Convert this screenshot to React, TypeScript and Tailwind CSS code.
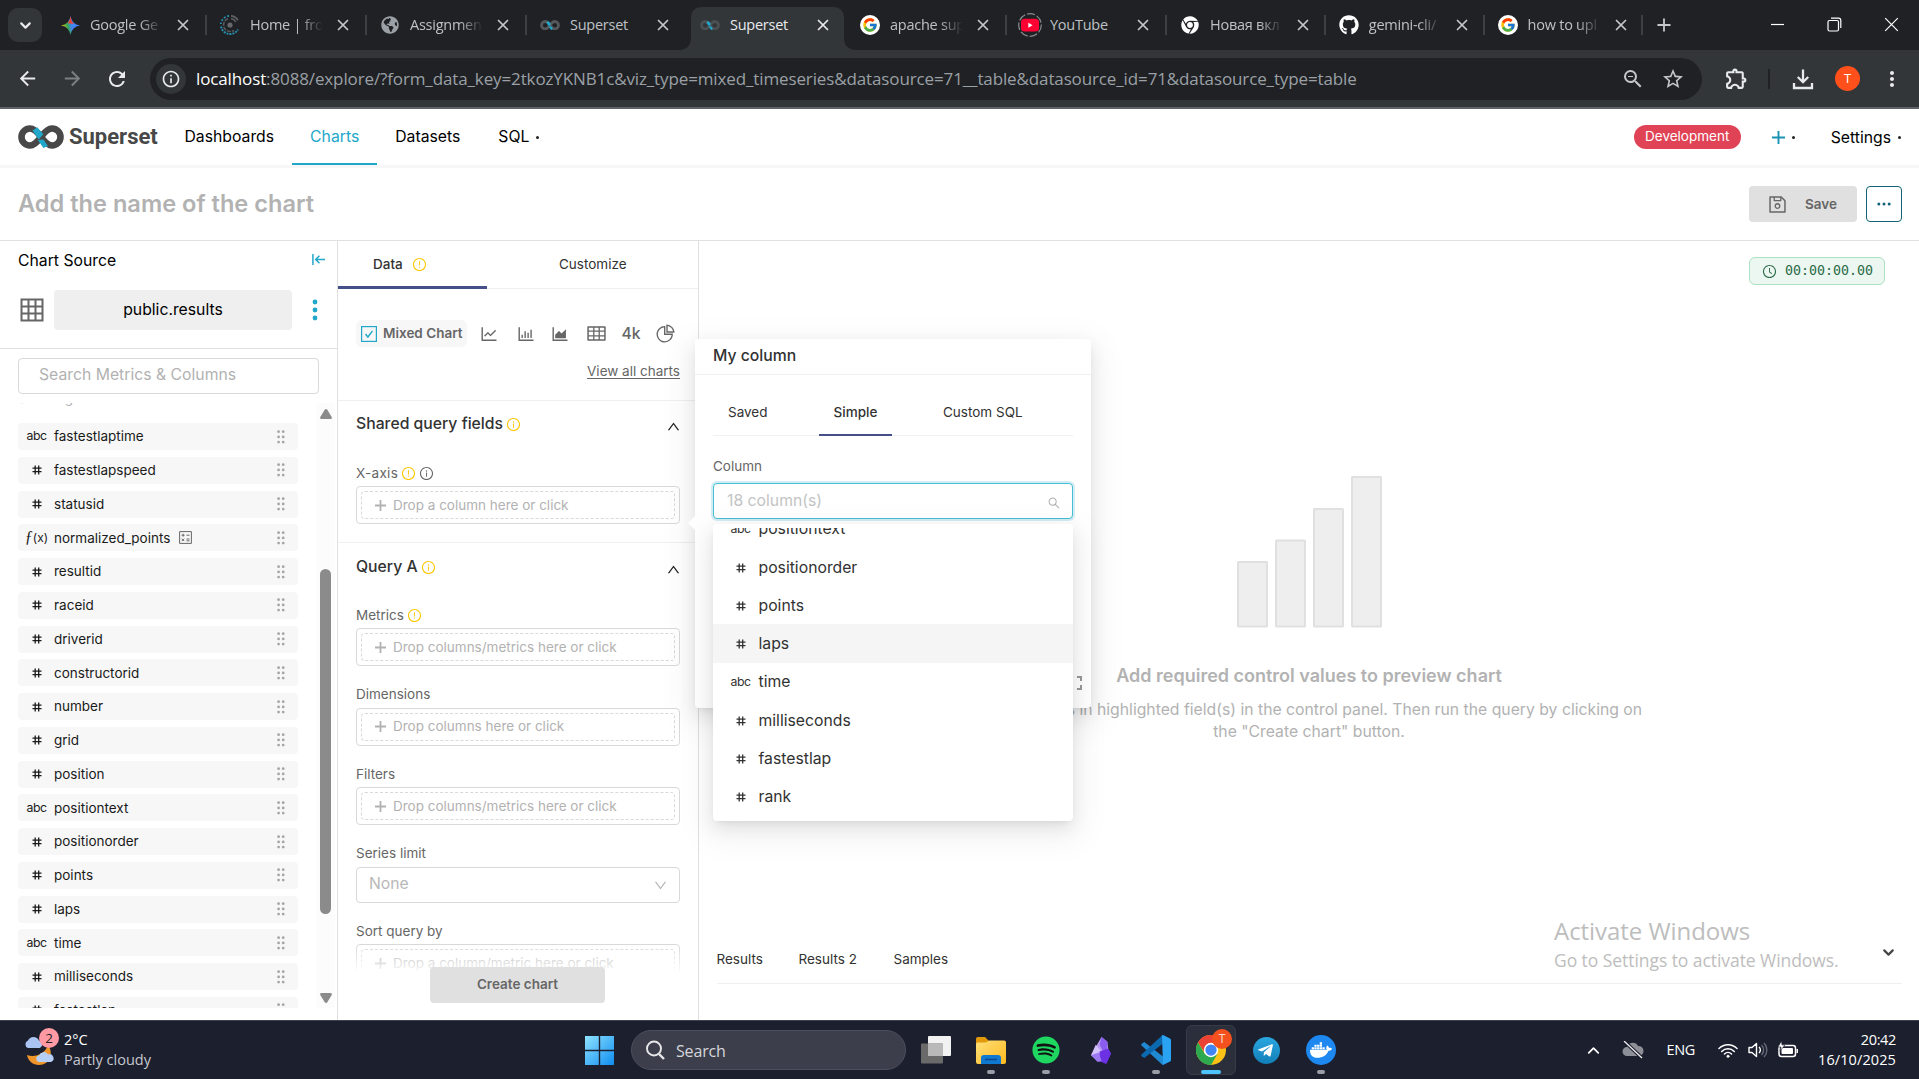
import React from "react";
import {
  AiOutlineAreaChart,
  AiOutlineBarChart,
  AiOutlineClockCircle,
  AiOutlineDown,
  AiOutlineExclamationCircle,
  AiOutlineInfoCircle,
  AiOutlineLineChart,
  AiOutlinePieChart,
  AiOutlineSave,
  AiOutlineSearch,
  AiOutlineTable,
  AiOutlineUp,
} from "react-icons/ai";
import {
  MdArrowBack,
  MdArrowForward,
  MdMoreVert,
  MdOutlineExtension,
  MdOutlineInfo,
  MdRefresh,
  MdStarBorder,
  MdZoomOut,
} from "react-icons/md";
import { FcGoogle } from "react-icons/fc";
import { FaChrome, FaDocker, FaGithub, FaGlobeAmericas, FaSpotify, FaTelegramPlane } from "react-icons/fa";
import { ChevronDown, ChevronUp, Plus, X } from "lucide-react";

/* ---------- Browser chrome ---------- */

const InfinityMark = ({ className, color = "#484848" }: { className: string; color?: string }) => (
  <svg viewBox="0 0 46 24" className={className} fill="none">
    <path
      d="M23 12C19 6.500 16 3.500 12 3.500a8.500 8.500 0 0 0 0 17c4 0 7-3 11-8.500s7-8.500 11-8.500a8.500 8.500 0 0 1 0 17c-4 0-7-3-11-8.500z"
      stroke={color}
      strokeWidth="6.600"
    />
    <path d="M14.500 5.500l4.800-3.300 6 7-4.600 5.200z" fill="#20a7c9" />
    <path d="M25.300 14.600l4.700 6.300-4.600 2-5.600-8z" fill="#20a7c9" />
  </svg>
);

const GeminiIcon = () => (
  <svg viewBox="0 0 20 20" className="size-[19px]">
    <defs>
      <linearGradient id="gem" x1="0" y1="0.600" x2="1" y2="0.400">
        <stop offset="0" stopColor="#fbbc04" />
        <stop offset="0.350" stopColor="#34a853" />
        <stop offset="0.550" stopColor="#4285f4" />
        <stop offset="1" stopColor="#4285f4" />
      </linearGradient>
    </defs>
    <path d="M10 0c.9 5.500 4.500 9.100 10 10-5.500.9-9.100 4.500-10 10-.9-5.500-4.500-9.100-10-10C5.500 9.100 9.100 5.500 10 0z" fill="url(#gem)" />
    <path d="M10 0c.9 5.500 2 7 4 8.300L7 7.500C9 5.500 9.500 3 10 0z" fill="#ea4335" />
  </svg>
);

const RadialIcon = () => (
  <svg viewBox="0 0 20 20" className="size-5" fill="none">
    <circle cx="10" cy="10" r="2.600" fill="#66686b" />
    <path d="M11 .8a9.200 9.200 0 0 1 7 4.500M11 3.500a6.600 6.600 0 0 1 4.800 3.300" stroke="#5d6063" strokeWidth="1.700" />
    <path d="M8 3.700A6.600 6.600 0 1 0 14 15.300" stroke="#55585c" strokeWidth="1.600" strokeDasharray="4 1" />
    <path d="M9 .9A9.200 9.200 0 0 0 .8 9" stroke="#2591b0" strokeWidth="1.700" strokeDasharray="2 1.600" />
    <path d="M1 11.500A9.200 9.200 0 0 0 18 14.500" stroke="#2591b0" strokeWidth="1.900" strokeDasharray="2 1" />
  </svg>
);

const GoogleIcon = () => (
  <span className="flex size-5 items-center justify-center rounded-full bg-white">
    <FcGoogle className="size-4" />
  </span>
);

const YoutubeIcon = () => (
  <svg viewBox="0 0 24 24" className="-mx-0.5 size-6 shrink-0" fill="none">
    <circle cx="12" cy="12" r="11.300" stroke="#8a8c8f" strokeWidth="1.200" strokeDasharray="8 2" />
    <rect x="3" y="5.800" width="18" height="12.800" rx="3.500" fill="#ff0033" />
    <path d="M10.300 9.700v5l4.300-2.500z" fill="#fff" />
  </svg>
);

type Tab = { title: string; icon: React.ReactNode; active?: boolean; sep?: boolean; fade?: boolean; narrow?: boolean };

const tabs: Tab[] = [
  { title: "Google Ge", icon: <GeminiIcon />, sep: true, fade: true },
  { title: "Home | fro", icon: <RadialIcon />, sep: true, fade: true },
  { title: "Assignmen", icon: <FaGlobeAmericas className="size-[18px] text-[#9aa0a6]" />, sep: true, fade: true },
  { title: "Superset", icon: <InfinityMark className="w-5" color="#55585b" /> },
  { title: "Superset", icon: <InfinityMark className="w-5" color="#4c4f52" />, active: true },
  { title: "apache sup", icon: <GoogleIcon />, sep: true, fade: true },
  { title: "YouTube", icon: <YoutubeIcon />, sep: true },
  { title: "Новая вкл", icon: <FaChrome className="size-[18px] text-white" />, sep: true, fade: true, narrow: true },
  { title: "gemini-cli/", icon: <FaGithub className="size-5 text-white" />, sep: true, fade: true, narrow: true },
  { title: "how to upl", icon: <GoogleIcon />, sep: true, fade: true, narrow: true },
];

const BrowserTab = ({ tab }: { tab: Tab }) => (
  <div className={"relative h-[50px] shrink-0 pt-[7px] " + (tab.narrow ? "w-[158.800px]" : "w-[160px]")}>
    {tab.active && (
      <svg viewBox="0 0 176 43" className="absolute top-[7px] -left-[8px] h-[43px] w-[176px]">
        <path d="M0 43c8 0 12-5 12-12V11C12 4 16 0 23 0h131c7 0 11 4 11 11v20c0 7 4 12 12 12z" fill="#323639" />
      </svg>
    )}
    <div className="relative flex h-9 items-center pl-[13px]">
      <span className="flex w-5 shrink-0 items-center justify-center">{tab.icon}</span>
      <span
        className={
          "ml-[10px] w-[76px] whitespace-nowrap text-[14.500px] tracking-[-0.250px] " +
          (tab.active ? "text-[#e8eaed]" : "text-[#bdc1c6]") +
          (tab.fade ? " [mask-image:linear-gradient(to_right,black_65%,transparent_96%)]" : "")
        }
      >
        {tab.title}
      </span>
      <X className={"ml-[8px] size-[18px] " + (tab.active ? "text-[#e8eaed]" : "text-[#c4c7cb]")} strokeWidth={2.3} />
    </div>
    {tab.sep && <div className="absolute top-[15px] right-0 h-5 w-[2px] bg-[#3c4043]" />}
  </div>
);

const Browser = () => (
  <div className="font-['Open_Sans','Noto_Sans',sans-serif]">
    <div className="flex h-[50px] bg-[#202124]">
      <div className="mt-2 ml-2 flex size-[34px] shrink-0 items-center justify-center rounded-[10px] bg-[#323639]">
        <ChevronDown className="mt-px size-[17px] text-[#e8eaed]" strokeWidth={3} />
      </div>
      <div className="ml-[5px] flex">
        {tabs.map((t, i) => (
          <BrowserTab key={i} tab={t} />
        ))}
      </div>
      <Plus className="mt-[15px] ml-[11px] size-5 text-[#c4c7cb]" strokeWidth={2.2} />
      <div className="mt-[17px] mr-[20px] ml-auto flex gap-[42px]">
        <svg viewBox="0 0 15 15" className="size-[15px]" stroke="#fff" fill="none">
          <path d="M1 7.500h13" strokeWidth="1.200" />
        </svg>
        <svg viewBox="0 0 15 15" className="size-[15px]" stroke="#fff" fill="none" strokeWidth="1.200">
          <rect x="1" y="3.500" width="10.500" height="10.500" rx="1.500" />
          <path d="M4 1.200h7.500a2.300 2.300 0 0 1 2.300 2.300V11" />
        </svg>
        <svg viewBox="0 0 15 15" className="size-[15px]" stroke="#fff" fill="none">
          <path d="M1.200 1.200l12.600 12.600M13.800 1.200L1.200 13.800" strokeWidth="1.200" />
        </svg>
      </div>
    </div>
    <div className="flex h-[59px] items-center border-b-2 border-[#5f6368] bg-[#323639]">
      <MdArrowBack className="ml-[16px] size-[23px] text-[#e8eaed]" />
      <MdArrowForward className="ml-[22px] size-[23px] text-[#7d8083]" />
      <MdRefresh className="ml-[21px] size-[24px] text-[#e8eaed]" />
      <div className="ml-[21px] flex h-[42px] w-[1552px] items-center rounded-full bg-[#202124] pl-[6px]">
        <span className="flex size-[30px] items-center justify-center rounded-full bg-[#323639]">
          <MdOutlineInfo className="size-[20px] text-[#e8eaed]" />
        </span>
        <span className="ml-[10px] pt-px text-[17px] tracking-[-0.125px] whitespace-nowrap text-[#9aa0a6]">
          <span className="text-white">localhost</span>
          :8088/explore/?form_data_key=2tkozYKNB1c&amp;viz_type=mixed_timeseries&amp;datasource=71__table&amp;datasource_id=71&amp;datasource_type=table
        </span>
        <MdZoomOut className="mt-px ml-auto size-[24px] text-[#c4c7cb]" />
        <MdStarBorder className="mt-px mr-[17px] ml-[16px] size-[24px] text-[#c4c7cb]" />
      </div>
      <MdOutlineExtension className="ml-[22px] size-[25px] text-[#e8eaed]" />
      <div className="ml-[19px] h-5 w-[2px] bg-[#202124]" />
      <svg viewBox="0 0 22 22" className="ml-[22px] size-[22px]" fill="none" stroke="#e8eaed" strokeWidth="2.300">
        <path d="M11 1.500v12.500M5.800 9l5.200 5.200L16.200 9M2 15v5h18v-5" />
      </svg>
      <span className="ml-[21px] flex size-[25px] items-center justify-center rounded-full bg-[#ff4f1a] text-[13px] text-white">T</span>
      <MdMoreVert className="ml-[20px] size-[24px] text-[#e8eaed]" />
    </div>
  </div>
);

/* ---------- Shared bits ---------- */

const Dot = ({ className }: { className: string }) => <span className={"size-[3px] rounded-full bg-[#222] " + className} />;

const TypeIcon = ({ type }: { type: string }) => {
  if (type === "abc") return <span className="text-[12.300px] tracking-[-0.500px]">abc</span>;
  if (type === "fx")
    return (
      <span className="text-[12px]">
        <span className="font-['Liberation_Serif',serif] text-[16px] leading-none italic">ƒ</span>(x)
      </span>
    );
  return (
    <svg viewBox="0 0 10 10" className="size-[10px]" stroke="currentColor" strokeWidth="1.300" fill="none">
      <path d="M3.200.5v9M6.700.5v9M.5 3.200h9M.5 6.700h9" />
    </svg>
  );
};

const Warn = ({ info }: { info?: boolean }) =>
  info ? (
    <AiOutlineInfoCircle className="size-[15px] text-[#fcc700]" />
  ) : (
    <AiOutlineExclamationCircle className="size-[15px] text-[#fcc700]" />
  );

/* ---------- Application header ---------- */

const TopNav = () => (
  <div className="flex h-[59px] items-start border-b-[3px] border-[#f7f7f7] text-[15.750px] text-black">
    <div className="flex h-14 w-[166.500px] items-center pl-[18px]">
      <InfinityMark className="mr-[5px] w-[46px]" />
      <span className="font-['Roboto',sans-serif] text-[22px] leading-none font-bold text-[#484848]">Superset</span>
    </div>
    <div className="flex h-14 items-center px-[18px]">Dashboards</div>
    <div className="flex h-14 items-center border-b-2 border-[#20a7c9] px-[18px] pt-[2px] text-[#20a7c9]">Charts</div>
    <div className="flex h-14 items-center px-[18px]">Datasets</div>
    <div className="flex h-14 items-center pl-[20px]">
      SQL <Dot className="ml-[7px]" />
    </div>
    <div className="mr-[18px] ml-auto flex h-14 items-center">
      <span className="flex h-[24px] w-[107px] items-center justify-center rounded-full bg-[#e04355] pb-[2px] text-[13.500px] text-white">
        Development
      </span>
      <svg viewBox="0 0 13 13" className="ml-[31px] size-[13px]" stroke="#1a93b3" strokeWidth="1.900">
        <path d="M6.500 0v13M0 6.500h13" />
      </svg>
      <Dot className="ml-[7px]" />
      <span className="ml-[36px] pt-[2px]">Settings</span>
      <Dot className="ml-[7px]" />
    </div>
  </div>
);

const TitleBar = () => (
  <div className="flex h-[73px] items-center border-b border-[#e0e0e0] pr-[17px] pl-[18px]">
    <span className="text-[23.600px] font-semibold text-[#b2b2b2]">Add the name of the chart</span>
    <div className="ml-auto flex h-9 w-[108px] items-center rounded bg-[#e0e0e0] pl-[18px] text-[13.500px] font-semibold text-[#666]">
      <AiOutlineSave className="mr-[17px] size-[21px]" />
      Save
    </div>
    <div className="ml-[9px] flex size-9 items-center justify-center rounded border border-[#156378]">
      <svg viewBox="0 0 14 4" className="h-1 w-[14px]" fill="#156378">
        <circle cx="1.800" cy="2" r="1.500" />
        <circle cx="7" cy="2" r="1.500" />
        <circle cx="12.200" cy="2" r="1.500" />
      </svg>
    </div>
  </div>
);

/* ---------- Dataset panel ---------- */

const fields: [string, string][] = [
  ["abc", "fastestlaptime"],
  ["#", "fastestlapspeed"],
  ["#", "statusid"],
  ["fx", "normalized_points"],
  ["#", "resultid"],
  ["#", "raceid"],
  ["#", "driverid"],
  ["#", "constructorid"],
  ["#", "number"],
  ["#", "grid"],
  ["#", "position"],
  ["abc", "positiontext"],
  ["#", "positionorder"],
  ["#", "points"],
  ["#", "laps"],
  ["abc", "time"],
  ["#", "milliseconds"],
  ["#", "fastestlap"],
];

const GridIcon = () => (
  <svg viewBox="0 0 24 24" className="size-6" fill="none" stroke="#666" strokeWidth="2">
    <path d="M1.500 1.500h21v21h-21zM8.500 1v22M15.500 1v22M1 8.500h22M1 15.500h22" />
  </svg>
);

const CalcIcon = () => (
  <svg viewBox="0 0 13 13" className="ml-[9px] size-[13px]" fill="none" stroke="#666" strokeWidth="1">
    <path d="M.6.6h11.800v11.800H.6zM2.600 4.200h3M4.100 2.700v3M7.500 4.200h3M7.500 8h3M7.500 9.800h3M2.800 7.600l2.400 2.400M5.200 7.600L2.800 10" />
  </svg>
);

const Grip = () => (
  <svg viewBox="0 0 8 14" className="ml-auto h-[14px] w-2" fill="#a6a6a6">
    {[1.700, 6.900, 12.100].map((y) => (
      <g key={y}>
        <circle cx="1.600" cy={y} r="1.400" />
        <circle cx="6.200" cy={y} r="1.400" />
      </g>
    ))}
  </svg>
);

const DatasetPanel = () => (
  <div className="flex w-[338px] shrink-0 flex-col border-r border-[#e0e0e0]">
    <div className="flex h-[49px] items-start justify-between pr-3 pl-[18px]">
      <span className="leading-[40px] text-[15.750px] text-black">Chart Source</span>
      <svg viewBox="0 0 14 12" className="mt-3 size-[13px]" fill="none" stroke="#20a7c9" strokeWidth="1.600">
        <path d="M1 0v12M4 6h10M8 2L4 6l4 4" />
      </svg>
    </div>
    <div className="flex h-[59px] items-start border-b border-[#e0e0e0] pl-[19.500px]">
      <div className="mt-2">
        <GridIcon />
      </div>
      <div className="ml-[10.500px] flex h-10 w-[238px] items-center justify-center rounded bg-[#efefef] text-[15.750px] text-black">
        public.results
      </div>
      <svg viewBox="0 0 6 22" className="mt-[8.500px] ml-[19.500px] h-[22px] w-[6px]" fill="#20a7c9">
        <circle cx="3" cy="3" r="2.400" />
        <circle cx="3" cy="11" r="2.400" />
        <circle cx="3" cy="19" r="2.400" />
      </svg>
    </div>
    <div className="mt-[9px] ml-[18px] flex h-9 w-[301px] shrink-0 items-center rounded border border-[#d9d9d9] pb-[3px] pl-[20px] text-[15.750px] text-[#b2b2b2]">
      Search Metrics &amp; Columns
    </div>
    <div className="mt-[9px] flex h-[605px] overflow-hidden">
      <div className="flex w-[316px] flex-col pl-[18px]">
        <div className="-mt-[14px] h-[34px] shrink-0 text-[13.500px] leading-[18px] text-[#b2b2b2]">Showing 18 of 18</div>
        {fields.map(([type, name]) => (
          <div key={name} className="mb-[6.750px] flex h-[27px] w-[280px] shrink-0 items-center rounded bg-[#f7f7f7] pr-[13.500px] text-[13.500px] text-[#1a1a1a]">
            <span className="flex w-9 shrink-0 items-center justify-center pl-px">
              <TypeIcon type={type} />
            </span>
            {name}
            {type === "fx" && <CalcIcon />}
            <Grip />
          </div>
        ))}
      </div>
      <div className="flex w-[19px] flex-col items-center bg-[#fcfcfc]">
        <svg viewBox="0 0 12 10" className="mt-[6px] h-[10px] w-3 shrink-0" fill="#8b8b8b">
          <path d="M6 0c.6 0 1 .3 1.300.8L11.700 8c.4.900 0 2-1 2H1.300c-1 0-1.400-1.100-1-2L4.700.8C5 .3 5.400 0 6 0z" />
        </svg>
        <div className="mt-[150px] h-[345px] w-[11px] shrink-0 rounded-full bg-[#8b8b8b]" />
        <svg viewBox="0 0 12 10" className="mt-[79px] h-[10px] w-3 shrink-0 rotate-180" fill="#8b8b8b">
          <path d="M6 0c.6 0 1 .3 1.300.8L11.700 8c.4.900 0 2-1 2H1.300c-1 0-1.400-1.100-1-2L4.700.8C5 .3 5.400 0 6 0z" />
        </svg>
      </div>
    </div>
  </div>
);

/* ---------- Control panel ---------- */

const Label = ({ children }: { children: React.ReactNode }) => (
  <div className="flex h-[26px] items-center gap-[3px] text-[13.500px] text-[#666]">{children}</div>
);

const DropBox = ({ text }: { text: string }) => (
  <div className="mb-[15.500px] h-[38px] rounded border border-[#d9d9d9] p-[4px]">
    <div className="flex h-[28px] w-[314px] items-center rounded border border-dashed border-[#d9d9d9] pb-[0.500px] pl-[13px] text-[13.500px] text-[#b2b2b2]">
      <svg viewBox="0 0 11 11" className="mt-[1px] mr-[7px] size-[11px]" stroke="#b2b2b2" strokeWidth="1.800">
        <path d="M5.500 0v11M0 5.500h11" />
      </svg>
      {text}
    </div>
  </div>
);

const SectionHeader = ({ title }: { title: string }) => (
  <div className="flex h-[45px] items-center text-[15.750px] font-medium text-[#323232]">
    {title}
    <span className="ml-[3px] pt-[2px]">
      <Warn info />
    </span>
    <AiOutlineUp className="mt-[6px] -mr-px ml-auto size-[15px] text-[#222]" />
  </div>
);

const ControlPanel = () => (
  <div className="relative flex w-[361px] shrink-0 flex-col overflow-hidden border-r border-[#e0e0e0]">
    <div className="flex h-12 shrink-0 border-b border-[#f0f0f0] text-[13.500px] text-[#323232]">
      <div className="flex h-12 w-[149px] items-center border-b-[3px] border-[#45508a] pt-[2px] pl-[35px] font-medium">
        Data
        <span className="ml-[9px]">
          <Warn />
        </span>
      </div>
      <div className="ml-[72px] flex h-[47px] items-center">Customize</div>
    </div>
    <div className="h-[112px] shrink-0 border-b border-[#f0f0f0] pt-[31px] pl-[18px]">
      <div className="flex h-[27px] w-[330px] items-center text-[#666]">
        <div className="mr-[12px] flex h-[27px] w-[111px] shrink-0 items-center rounded-md bg-[#f7f7f7] pl-[5px] text-[13.500px] font-semibold">
          <svg viewBox="0 0 16 16" className="mr-[6px] size-4 shrink-0" fill="none" stroke="#20a7c9">
            <rect x=".6" y=".6" width="14.800" height="14.800" strokeWidth="1.200" />
            <path d="M4.500 8l2.400 3 4.600-6.200" strokeWidth="1.400" />
          </svg>
          <span className="whitespace-nowrap">Mixed Chart</span>
        </div>
        <AiOutlineLineChart className="size-[20px] shrink-0" />
        <AiOutlineBarChart className="ml-[16.500px] size-[20px] shrink-0" />
        <AiOutlineAreaChart className="ml-[14px] size-[20px] shrink-0" />
        <AiOutlineTable className="ml-[16px] size-[21px] shrink-0" />
        <span className="ml-[15px] w-[19px] text-[15.750px] font-medium">4k</span>
        <AiOutlinePieChart className="ml-[14px] size-[21px] shrink-0" />
      </div>
      <div className="mt-[14px] mr-[18px] text-right text-[13.500px] leading-5 text-[#666]">
        <span className="underline underline-offset-[1.500px]">View all charts</span>
      </div>
    </div>
    <div className="h-[142px] shrink-0 border-b border-[#f0f0f0] px-[18px]">
      <SectionHeader title="Shared query fields" />
      <div className="mt-[14px]">
        <Label>
          <span className="tracking-[0.300px]">X-axis</span>
          <Warn />
          <AiOutlineInfoCircle className="size-[15px] text-[#666]" />
        </Label>
        <DropBox text="Drop a column here or click" />
      </div>
    </div>
    <div className="shrink-0 px-[18px] pt-px">
      <SectionHeader title="Query A" />
      <div className="mt-[13px]">
        <Label>
          Metrics <Warn />
        </Label>
        <DropBox text="Drop columns/metrics here or click" />
        <Label>Dimensions</Label>
        <DropBox text="Drop columns here or click" />
        <Label>Filters</Label>
        <DropBox text="Drop columns/metrics here or click" />
        <Label>Series limit</Label>
        <div className="mb-[15.500px] flex h-9 items-center justify-between rounded border border-[#d9d9d9] pr-[11px] pb-[1px] pl-[12px] text-[15.750px] text-[#b8b8b8]">
          None
          <AiOutlineDown className="mt-[2px] size-[15px]" />
        </div>
        <Label>Sort query by</Label>
        <DropBox text="Drop a column/metric here or click" />
      </div>
    </div>
    <div className="absolute inset-x-0 bottom-0 flex h-[74px] justify-center bg-[linear-gradient(to_bottom,transparent,white_28px)] pt-[21px]">
      <div className="mr-px flex h-9 w-[175px] items-center justify-center rounded bg-[#e0e0e0] pb-px text-[13.500px] font-semibold text-[#666]">
        Create chart
      </div>
    </div>
  </div>
);

/* ---------- Preview area ---------- */

const Preview = () => (
  <div className="flex flex-1 flex-col">
    <div className="flex justify-end pt-4 pr-[34px]">
      <div className="flex h-7 w-[136px] items-center rounded-md border border-[#ace1c4] bg-[#ebf7f0] pl-[12px] font-['DejaVu_Sans_Mono',monospace] text-[13.300px] text-[#2b6a48]">
        <AiOutlineClockCircle className="mr-[8px] size-[15px] shrink-0" />
        00:00:00.00
      </div>
    </div>
    <div className="mt-[191px] flex flex-col items-center">
      <svg viewBox="0 0 146 152" className="ml-[2px] h-[152px] w-[146px]" fill="#eee" stroke="#e0e0e0" strokeWidth="2">
        <rect x="1" y="86" width="29" height="64.500" rx=".5" />
        <rect x="39" y="64.500" width="29" height="86" rx=".5" />
        <rect x="77" y="33" width="29" height="117.500" rx=".5" />
        <rect x="115" y="1" width="29" height="149.500" rx=".5" />
      </svg>
      <div className="mt-[37px] text-[18px] leading-[22px] font-semibold text-[#b2b2b2]">Add required control values to preview chart</div>
      <div className="mt-[12px] w-[680px] text-center text-[15.750px] leading-[22px] text-[#b2b2b2]">
        Select values in highlighted field(s) in the control panel. Then run the query by clicking on
        <br />
        the "Create chart" button.
      </div>
    </div>
    <div className="mt-auto mr-[17px] mb-9 ml-[17.500px] flex h-[48px] items-center border-b border-[#f0f0f0] text-[13.500px] text-[#323232]">
      <span className="w-[82px]">Results</span>
      <span className="w-[95px]">Results 2</span>
      <span>Samples</span>
      <ChevronDown className="-mt-[14px] mr-[5px] ml-auto size-[17px] text-[#444]" strokeWidth={3} />
    </div>
  </div>
);

/* ---------- Column popover and its dropdown ---------- */

const options: [string, string][] = [
  ["abc", "positiontext"],
  ["#", "positionorder"],
  ["#", "points"],
  ["#", "laps"],
  ["abc", "time"],
  ["#", "milliseconds"],
  ["#", "fastestlap"],
  ["#", "rank"],
];

const Popover = () => (
  <div className="absolute top-[339px] left-[695px] h-[369px] w-[396px] rounded-sm bg-white shadow-[0_3px_7px_-4px_rgba(0,0,0,0.12),0_7px_18px_rgba(0,0,0,0.08),0_10px_32px_9px_rgba(0,0,0,0.05)]">
    <div className="absolute top-[179px] -left-[5px] size-[10px] rotate-45 bg-white" />
    <div className="relative flex h-9 items-center border-b border-[#f0f0f0] pb-[1px] pl-[18px] text-[15.750px] font-medium text-[#323232]">
      My column
    </div>
    <div className="mx-[18px] mt-[23px] flex h-[38px] border-b border-[#f0f0f0] text-[13.500px] text-[#323232]">
      <span className="w-[106px] pl-[15px] leading-[29px]">Saved</span>
      <span className="h-[38px] w-[73px] border-b-2 border-[#45508a] text-center leading-[29px] font-medium">Simple</span>
      <span className="ml-[51px] leading-[29px]">Custom SQL</span>
    </div>
    <div className="mx-[18px] mt-[20px] h-[27px] text-[13.500px] leading-[21px] text-[#666]">Column</div>
    <div className="relative mx-[18px]">
      <div className="flex h-9 items-center justify-between rounded border border-[#45bed6] bg-white pr-[11px] pb-px pl-[13px] text-[15.750px] text-[#c4c4c4] shadow-[0_0_0_2px_rgba(32,167,201,0.2)]">
        18 column(s)
        <AiOutlineSearch className="mt-[4px] size-[14px] text-[#b0b0b0]" />
      </div>
      <div className="absolute top-[41px] left-0 z-10 h-[297px] w-[360px] rounded-sm bg-white pt-[4px] shadow-[0_3px_7px_-4px_rgba(0,0,0,0.12),0_7px_18px_rgba(0,0,0,0.08),0_10px_32px_9px_rgba(0,0,0,0.05)]">
        <div className="h-[289px] overflow-hidden">
          <div className="-mt-[18.500px]">
            {options.map(([type, name]) => (
              <div
                key={name}
                className={"flex h-[38.250px] items-center pt-px pl-[14px] text-[15.750px] text-[#323232] " + (name === "laps" ? "bg-[#f5f5f5]" : "")}
              >
                <span className="mr-[8px] flex w-[27px] justify-center pt-[1px]">
                  <TypeIcon type={type} />
                </span>
                <span className="-ml-[3.500px]">{name}</span>
              </div>
            ))}
          </div>
        </div>
      </div>
    </div>
    <svg viewBox="0 0 14 14" className="absolute right-[9px] bottom-[18px] size-[14px]" fill="none" stroke="#999" strokeWidth="2">
      <path d="M1 5V1h4M9 1h4v4M13 9v4H9M5 13H1V9" />
    </svg>
  </div>
);

/* ---------- Windows taskbar ---------- */

const FolderIcon = () => (
  <svg viewBox="0 0 30 27" className="w-[30px]">
    <defs>
      <linearGradient id="fold" x1="0" y1="0" x2="1" y2="1">
        <stop offset="0" stopColor="#ffe07a" />
        <stop offset="1" stopColor="#ffb91d" />
      </linearGradient>
    </defs>
    <path d="M0 2a2 2 0 0 1 2-2h7l4 4h15a2 2 0 0 1 2 2v8H0z" fill="#e29a0a" />
    <path d="M0 7a2 2 0 0 1 1.500-1.500H10L13 3.500h15a2 2 0 0 1 2 2V25a2 2 0 0 1-2 2H2a2 2 0 0 1-2-2z" fill="url(#fold)" />
    <path d="M5 27v-6a3 3 0 0 1 3-3h14a3 3 0 0 1 3 3v6z" fill="#0f78d0" />
    <path d="M9 22.500h12" stroke="#0a4a8c" strokeWidth="1.500" />
  </svg>
);

const ObsidianIcon = () => (
  <svg viewBox="0 0 22 28" className="h-[27px]">
    <path d="M12 0l6 5 1 8-9 3-4-6z" fill="#b79bf5" />
    <path d="M6 8l5 6-1 10-9-5z" fill="#d3c2fb" />
    <path d="M12 0l-2 8 4 8 4-3V5z" fill="#8a5cf0" />
    <path d="M10 15l9-3 3 5-5 11-8-3z" fill="#6c31e3" />
    <path d="M1 19l8-3 3 9-4 1z" fill="#9d78f3" />
  </svg>
);

const VsCodeIcon = () => (
  <svg viewBox="0 0 30 30" className="size-[30px]">
    <path d="M1 8.500L3.300 7 22 21.500V30l-1-.4L.8 10.800C0 10 0 9.200 1 8.500z" fill="#1f8ad2" />
    <path d="M1 21.500L3.300 23 22 8.500V0l-1 .4L.8 19.200c-.8.8-.8 1.600.2 2.300z" fill="#0b69b0" />
    <path d="M21 .4L22 0l7 3.400c.6.300 1 .9 1 1.600v20c0 .7-.4 1.300-1 1.600L22 30z" fill="#2aa3f2" />
  </svg>
);

const ChromeIcon = () => (
  <svg viewBox="0 0 48 48" className="size-[30px]">
    <circle cx="24" cy="24" r="24" fill="#fbc116" />
    <path d="M24 24L3.200 12A24 24 0 0 1 44.800 12z" fill="#ea4335" />
    <path d="M24 13h20.800A24 24 0 0 0 3.200 12l10 15z" fill="#ea4335" />
    <path d="M3.200 12A24 24 0 0 0 24 48l10.400-18L24 35l-10-5z" fill="#2da94f" />
    <circle cx="24" cy="24" r="11.500" fill="#fff" />
    <circle cx="24" cy="24" r="9" fill="#4285f4" />
  </svg>
);

const TaskItem = ({ children, running, className }: { children: React.ReactNode; running?: boolean; className?: string }) => (
  <div className={"relative flex h-[50px] w-[50px] shrink-0 items-center justify-center rounded-md " + (className ?? "")}>
    {children}
    {running && <span className="absolute bottom-px h-1 w-2 rounded-full bg-[#9a9da6]" />}
  </div>
);

const Taskbar = () => (
  <div className="relative flex h-[59px] items-center border-t border-[#3e414b] bg-[#1c1f2e] font-['Open_Sans','Noto_Sans',sans-serif] text-[14.500px] text-white">
    <div className="relative ml-[24px] h-[30px] w-[34px]">
      <svg viewBox="0 0 34 32" className="absolute -top-px left-0 w-[34px]">
        <path d="M3 21c8 3 18-1 21-10 6 8 2 20-9 20C9 31 4 27 3 21z" fill="#f0952a" />
        <path d="M4 14a4 4 0 0 1 0-7.500 6 6 0 0 1 11 0A4 4 0 0 1 16 14z" fill="#a9c4f2" />
        <path d="M15 28a3.300 3.300 0 0 1 0-6.500 5 5 0 0 1 9-1 4 4 0 0 1 3 7.500z" fill="#b5cff8" />
      </svg>
      <span className="absolute -top-[7px] left-[15px] flex size-5 items-center justify-center rounded-full bg-[#ff99a4] text-[13.500px] text-[#222]">2</span>
    </div>
    <div className="ml-[6px]">
      <div className="leading-5">2°C</div>
      <div className="leading-5 text-[#c6c8ce]">Partly cloudy</div>
    </div>
    <div className="absolute top-[4px] left-[574px] flex items-center">
      <TaskItem>
        <svg viewBox="0 0 29 29" className="size-[29px]">
          <defs>
            <linearGradient id="win" x1="0" y1="0" x2="1" y2="1">
              <stop offset="0" stopColor="#8fe3ff" />
              <stop offset="1" stopColor="#0f8df0" />
            </linearGradient>
          </defs>
          <path d="M0 0h13.800v13.800H0zM15.200 0H29v13.800H15.200zM0 15.200h13.800V29H0zM15.200 15.200H29V29H15.200z" fill="url(#win)" />
        </svg>
      </TaskItem>
      <div className="ml-[7px] flex h-10 w-[275px] items-center rounded-full border border-[#4c4f5b] bg-[#3c3e4b] pl-[13px] text-[16px] tracking-[-0.150px] text-[#d5d6da]">
        <svg viewBox="0 0 20 20" className="mr-[11px] size-5" fill="none" stroke="#e8e8ea" strokeWidth="1.900">
          <circle cx="9" cy="8.500" r="7" />
          <path d="M14 14l5 5" strokeWidth="2.400" />
        </svg>
        <span className="pt-px">Search</span>
      </div>
      <TaskItem className="ml-[5px]">
        <svg viewBox="0 0 30 28" className="w-[30px]">
          <rect x="7" width="23" height="20" rx="1" fill="#f2f2f2" />
          <rect y="7.500" width="22" height="20" rx="1" fill="#6a6a6a" />
          <rect x="7" y="7.500" width="15" height="12.500" fill="#b9b9b9" />
        </svg>
      </TaskItem>
      <TaskItem className="ml-[5px]" running>
        <FolderIcon />
      </TaskItem>
      <TaskItem className="ml-[5px]" running>
        <span className="flex size-[26px] items-center justify-center rounded-full bg-[#121212]">
          <FaSpotify className="size-7 shrink-0 text-[#1ed760]" />
        </span>
      </TaskItem>
      <TaskItem className="ml-[5px]">
        <ObsidianIcon />
      </TaskItem>
      <TaskItem className="ml-[5px]" running>
        <VsCodeIcon />
      </TaskItem>
      <TaskItem className="ml-[5px] border border-[#383b47] bg-[#2b2e3b]">
        <ChromeIcon />
        <span className="absolute top-[3px] right-[3px] flex size-5 items-center justify-center rounded-full bg-[#f4511e] text-[12px] text-white/80">T</span>
        <span className="absolute bottom-0 h-1 w-5 rounded-full bg-[#4cc2ff]" />
      </TaskItem>
      <TaskItem className="ml-[5px]">
        <span className="flex size-[27px] items-center justify-center rounded-full bg-linear-to-b from-[#2aa7e0] to-[#127fb8]">
          <FaTelegramPlane className="mr-[2px] size-[17px] text-white" />
        </span>
      </TaskItem>
      <TaskItem className="ml-[5px]" running>
        <span className="flex size-[30px] items-center justify-center rounded-full bg-[#1d88f0]">
          <FaDocker className="size-[22px] text-white" />
        </span>
      </TaskItem>
    </div>
    <div className="mr-[23px] ml-auto flex items-center">
      <ChevronUp className="size-[19px]" strokeWidth={2.2} />
      <svg viewBox="0 0 22 18" className="ml-[19px] h-[18px] w-[22px]">
        <path d="M5 15a4.500 4.500 0 0 1 0-9 6 6 0 0 1 11-1 5 5 0 0 1 1 10z" fill="#8d8f96" />
        <path d="M2 0l18 17" stroke="#1c1f2e" strokeWidth="3.500" />
        <path d="M2 0l18 17" stroke="#f0f0f0" strokeWidth="1.300" />
      </svg>
      <span className="ml-[22px] text-[14.500px] tracking-[-0.300px]">ENG</span>
      <svg viewBox="0 0 20 15" className="ml-[23px] h-[15px] w-5" fill="none" stroke="#fff" strokeWidth="1.500" strokeLinecap="round">
        <path d="M1 5.500a12.500 12.500 0 0 1 18 0M3.700 8.500a8.800 8.800 0 0 1 12.600 0M6.500 11a5 5 0 0 1 7 0" />
        <circle cx="10" cy="13.300" r="1.200" fill="#fff" strokeWidth=".5" />
      </svg>
      <svg viewBox="0 0 20 16" className="ml-[10px] h-4 w-5" fill="none" stroke="#fff" strokeWidth="1.400">
        <path d="M1 5.500h3L8.500 1.500v13L4 10.500H1z" strokeLinejoin="round" />
        <path d="M11 5a4 4 0 0 1 0 6" />
        <path d="M13.500 3a7 7 0 0 1 0 10M16 1a10 10 0 0 1 0 14" stroke="#666977" />
      </svg>
      <svg viewBox="0 0 21 17" className="-mt-[2px] ml-[10px] h-[17px] w-[21px]">
        <rect x="1" y="4.500" width="16.500" height="11" rx="2.500" fill="none" stroke="#fff" strokeWidth="1.500" />
        <rect x="3.500" y="7" width="11.500" height="6" rx="1" fill="#fff" />
        <path d="M18.500 8h1.500v4h-1.500z" fill="#fff" />
        <path d="M3.500 0L0 6h3l-1 4 5-6H4z" fill="#fff" stroke="#1c1f2e" strokeWidth=".6" />
      </svg>
      <div className="w-[97px] text-right">
        <div className="leading-5 tracking-[-0.350px]">20:42</div>
        <div className="leading-5 tracking-[0.100px]">16/10/2025</div>
      </div>
    </div>
  </div>
);

export default function App() {
  return (
    <div className="relative flex h-[1079px] w-[1919px] flex-col overflow-hidden bg-white font-['Inter',sans-serif]">
      <Browser />
      <TopNav />
      <TitleBar />
      <div className="flex h-[779px]">
        <DatasetPanel />
        <ControlPanel />
        <Preview />
      </div>
      <Popover />
      <div className="absolute top-[914px] left-[1554px] font-['Open_Sans','Noto_Sans',sans-serif] whitespace-nowrap text-[#bdbdbd]">
        <div className="text-[24px] leading-[34px] tracking-[-0.050px]">Activate Windows</div>
        <div className="text-[17.500px] leading-[25px] tracking-[-0.060px]">Go to Settings to activate Windows.</div>
      </div>
      <Taskbar />
    </div>
  );
}
